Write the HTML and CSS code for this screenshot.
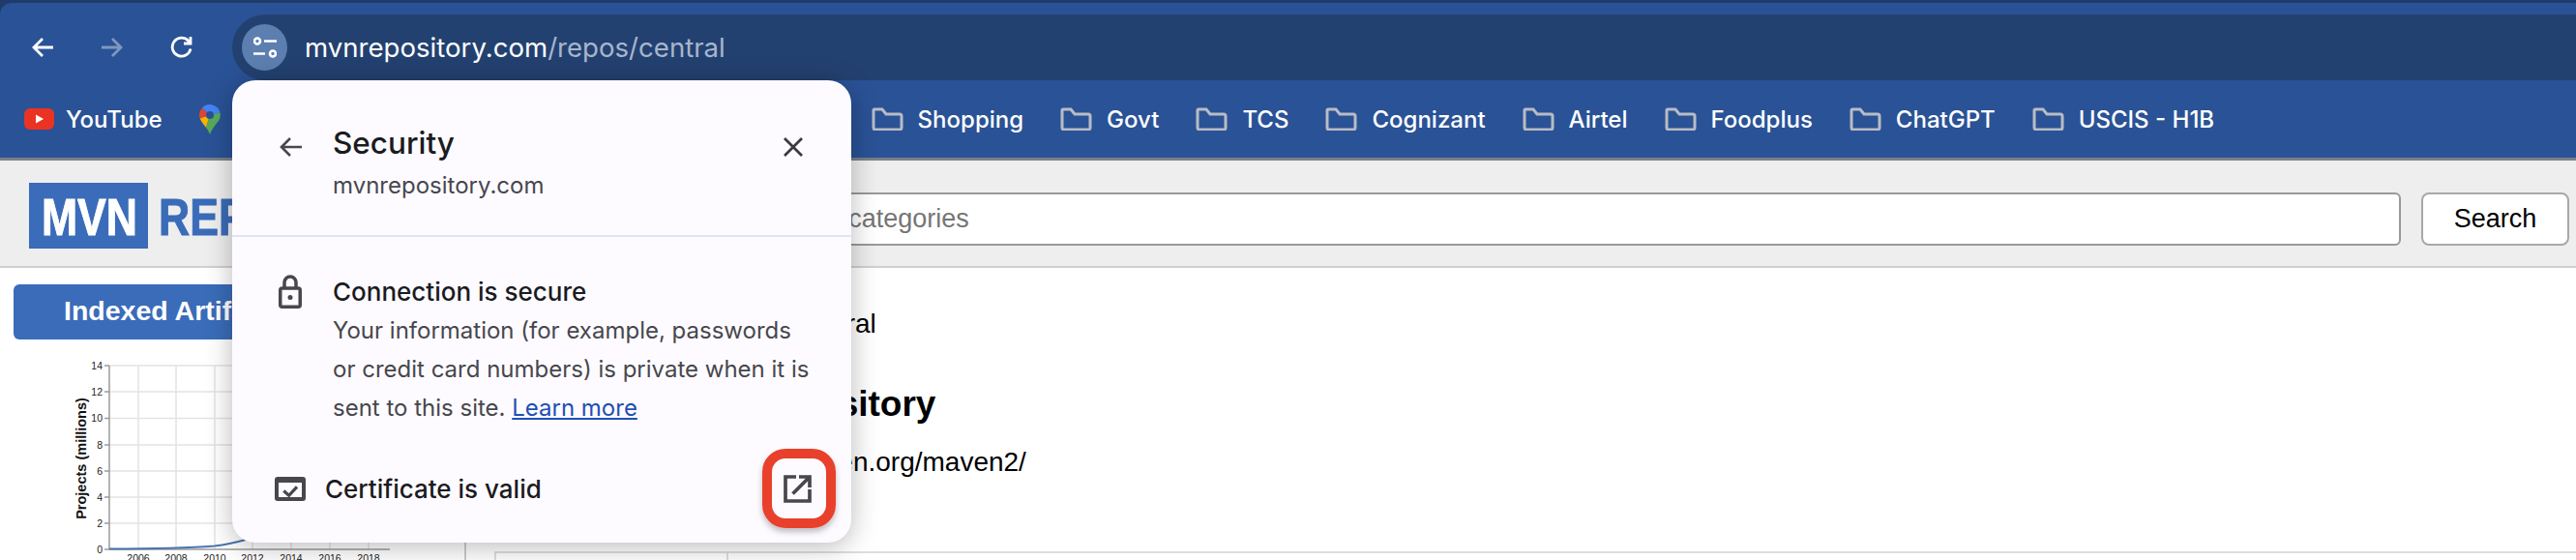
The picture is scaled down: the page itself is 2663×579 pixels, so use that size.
FILE: index.html
```html
<!DOCTYPE html>
<html lang="en">
<head>
  <meta charset="UTF-8" />
  <title>Security - mvnrepository.com</title>
  <link rel="stylesheet" href="styles.css">
</head>
<body>
  <div class="browser">
    <div class="toolbar">
      <div class="nav">
        <svg class="nav-icon" viewBox="0 0 24 24"><path d="M22 12H3M11 3l-9 9 9 9" /></svg>
        <svg class="nav-icon dim" viewBox="0 0 24 24"><path d="M2 12h19M13 3l9 9-9 9" /></svg>
        <svg class="nav-icon reload" viewBox="0 0 24 24"><path d="M21 13.500A9.500 9.500 0 1 1 18.500 5L21 7.500M21 1v7h-7" /></svg>
      </div>
      <div class="urlbar">
        <span class="site-info">
          <svg viewBox="0 0 24 26" width="24" height="26"><circle cx="4" cy="6.500" r="3" /><path d="M11 6.500h13M0 19.500h12" /><circle cx="20" cy="19.500" r="3" /></svg>
        </span>
        <span class="url">mvnrepository.com<span class="url-path">/repos/central</span></span>
      </div>
    </div>

    <div class="bookmarks">
      <div class="bookmark">
        <svg class="yt" viewBox="0 0 31 22"><rect width="31" height="22" rx="6" fill="#ea3323" /><path d="M12 6.500l8 4.500-8 4.500z" fill="#fff" /></svg>
        <span>YouTube</span>
      </div>
      <svg class="maps" viewBox="0 0 22 31">
        <path d="M3 3.400A11 11 0 0 0 .700 14.500L11 11z" fill="#db4437" />
        <path d="M3 3.400A11 11 0 0 1 21.500 8.500L11 11z" fill="#4285f4" />
        <path d="M.700 14.500C2 18 5 21 7 24l4-13z" fill="#f4b400" />
        <path d="M21.500 8.500A11 11 0 0 1 20 17C16 22 12.500 26 11 31 10 28 8.500 26 7 24l4-13z" fill="#5aa95a" />
        <circle cx="11" cy="11" r="4" fill="#2b5296" />
      </svg>
      <div class="bookmark shopping"><svg class="folder" viewBox="0 0 33 24"><path d="M2 3a1 1 0 0 1 1-1h8l4 5h14a2 2 0 0 1 2 2v12a2 2 0 0 1-2 2H4a2 2 0 0 1-2-2z" /></svg><span>Shopping</span></div>
      <div class="bookmark"><svg class="folder" viewBox="0 0 33 24"><path d="M2 3a1 1 0 0 1 1-1h8l4 5h14a2 2 0 0 1 2 2v12a2 2 0 0 1-2 2H4a2 2 0 0 1-2-2z" /></svg><span>Govt</span></div>
      <div class="bookmark"><svg class="folder" viewBox="0 0 33 24"><path d="M2 3a1 1 0 0 1 1-1h8l4 5h14a2 2 0 0 1 2 2v12a2 2 0 0 1-2 2H4a2 2 0 0 1-2-2z" /></svg><span>TCS</span></div>
      <div class="bookmark"><svg class="folder" viewBox="0 0 33 24"><path d="M2 3a1 1 0 0 1 1-1h8l4 5h14a2 2 0 0 1 2 2v12a2 2 0 0 1-2 2H4a2 2 0 0 1-2-2z" /></svg><span>Cognizant</span></div>
      <div class="bookmark"><svg class="folder" viewBox="0 0 33 24"><path d="M2 3a1 1 0 0 1 1-1h8l4 5h14a2 2 0 0 1 2 2v12a2 2 0 0 1-2 2H4a2 2 0 0 1-2-2z" /></svg><span>Airtel</span></div>
      <div class="bookmark"><svg class="folder" viewBox="0 0 33 24"><path d="M2 3a1 1 0 0 1 1-1h8l4 5h14a2 2 0 0 1 2 2v12a2 2 0 0 1-2 2H4a2 2 0 0 1-2-2z" /></svg><span>Foodplus</span></div>
      <div class="bookmark"><svg class="folder" viewBox="0 0 33 24"><path d="M2 3a1 1 0 0 1 1-1h8l4 5h14a2 2 0 0 1 2 2v12a2 2 0 0 1-2 2H4a2 2 0 0 1-2-2z" /></svg><span>ChatGPT</span></div>
      <div class="bookmark"><svg class="folder" viewBox="0 0 33 24"><path d="M2 3a1 1 0 0 1 1-1h8l4 5h14a2 2 0 0 1 2 2v12a2 2 0 0 1-2 2H4a2 2 0 0 1-2-2z" /></svg><span>USCIS - H1B</span></div>
    </div>
  </div>

  <header class="site-header">
    <svg class="logo" viewBox="0 0 440 68" width="440" height="68">
      <rect width="123" height="68" fill="#3a6cb9" />
      <text x="13" y="54" textLength="99" lengthAdjust="spacingAndGlyphs" class="logo-mvn">MVN</text>
      <text x="134" y="54" textLength="290" lengthAdjust="spacingAndGlyphs" class="logo-rep">REPOSITORY</text>
    </svg>
    <div class="search-box">Search for groups, artifacts, categories</div>
    <button class="search-btn">Search</button>
  </header>

  <div class="page">
    <aside class="sidebar">
      <div class="side-title">Indexed Artifacts (67.9M)</div>
      <svg class="chart" viewBox="0 0 400 229" width="400" height="229">
        <g class="grid">
          <path d="M113 27h290M113 54h290M113 81.500h290M113 109h290M113 136h290M113 163h290M113 190h290" />
          <path d="M143 27v190M182 27v190M222 27v190M261 27v190M301 27v190M341 27v190M381 27v190" />
        </g>
        <path class="axis" d="M113 27v190h290M108 27h5M108 54h5M108 81.500h5M108 109h5M108 136h5M108 163h5M108 190h5M108 217h5" />
        <path class="curve" d="M113 216.500C160 216.500 190 216 222 213.500C235 212 245 209.500 254 207C300 190 340 120 400 40" />
        <g class="ticks">
          <text x="106" y="31">14</text>
          <text x="106" y="58">12</text>
          <text x="106" y="85">10</text>
          <text x="106" y="113">8</text>
          <text x="106" y="140">6</text>
          <text x="106" y="167">4</text>
          <text x="106" y="194">2</text>
          <text x="106" y="221">0</text>
        </g>
        <g class="years">
          <text x="143" y="230">2006</text>
          <text x="182" y="230">2008</text>
          <text x="222" y="230">2010</text>
          <text x="261" y="230">2012</text>
          <text x="301" y="230">2014</text>
          <text x="341" y="230">2016</text>
          <text x="381" y="230">2018</text>
        </g>
        <text class="chart-label" transform="translate(89 123) rotate(-90)">Projects (millions)</text>
      </svg>
    </aside>
    <main class="content">
      <div class="crumbs">Home » Repositories » Central</div>
      <h2 class="repo-title">Maven Central Repository</h2>
      <div class="repo-url"><span class="repo-url-label">URL</span>https://repo1.maven.org/maven2/</div>
      <table class="repo-table"><tr><td class="repo-cell"></td><td></td></tr></table>
    </main>
  </div>

  <div class="popup">
    <div class="popup-head">
      <svg class="popup-back" viewBox="0 0 24 24"><path d="M23 12H3M11 3l-9 9 9 9" /></svg>
      <div class="popup-titles">
        <div class="popup-title">Security</div>
        <div class="popup-host">mvnrepository.com</div>
      </div>
      <svg class="popup-close" viewBox="0 0 22 20"><path d="M2 1l18 18M20 1L2 19" /></svg>
    </div>
    <div class="popup-body">
      <svg class="lock" viewBox="0 0 24 35">
        <path d="M6 14V8a6 6 0 0 1 12 0v6" />
        <rect x="1.750" y="14" width="20.500" height="19.250" rx="2" />
        <circle cx="12" cy="23.500" r="2.500" class="solid" />
      </svg>
      <div>
        <div class="conn-title">Connection is secure</div>
        <p class="conn-text">Your information (for example, passwords or credit card numbers) is private when it is sent to this site. <a class="learn" href="#">Learn more</a></p>
      </div>
    </div>
    <div class="cert-row">
      <svg class="cert-icon" viewBox="0 0 32 25">
        <rect width="32" height="25" rx="3" class="cert-frame" />
        <rect x="4" y="6" width="24" height="15" class="cert-inner" />
        <path d="M9.300 14.500l5.400 4.800 8.300-9" class="cert-check" />
      </svg>
      <span class="cert-text">Certificate is valid</span>
      <span class="cert-open">
        <svg viewBox="0 0 29 29" width="29" height="29"><path d="M13 2H2v25h25V15" /><path d="M9.500 19.500L26 3M16 2h11v11" /></svg>
      </span>
    </div>
  </div>
</body>
</html>
```

FILE: styles.css
```css
html, body {
  margin: 0;
  height: 579px;
  overflow: hidden;
  background: #fff;
  font-family: "Liberation Sans", Arial, sans-serif;
}

.browser {
  background: #1f3b6c;
  padding-top: 3px;
}

.toolbar {
  display: flex;
  height: 80px;
  background: #2a5296;
  border-radius: 12px 0 0 0;
}

.nav {
  display: flex;
  align-items: center;
  gap: 46px;
  flex: none;
  width: 240px;
  padding: 18px 0 6px 33px;
  box-sizing: border-box;
}

.nav-icon {
  flex: none;
  width: 24px;
  height: 24px;
  fill: none;
  stroke: #fff;
  stroke-width: 2.800;
}

.nav-icon.dim {
  stroke: #7f97bf;
}

.nav-icon.reload {
  margin-left: 3px;
}

.urlbar {
  flex: 1;
  display: flex;
  align-items: center;
  gap: 18px;
  margin-top: 12px;
  padding: 0 0 0 10px;
  background: #234170;
  border-radius: 34px 0 0 34px;
}

.site-info {
  display: flex;
  align-items: center;
  justify-content: center;
  width: 47px;
  height: 48px;
  border-radius: 50%;
  background: #5c7fb0;
}

.site-info svg {
  fill: none;
  stroke: #fff;
  stroke-width: 2.600;
}

.url {
  font-family: Inter, sans-serif;
  font-size: 27.600px;
  color: #fff;
}

.url-path {
  color: #a7b6ce;
}

.bookmarks {
  display: flex;
  align-items: center;
  gap: 38px;
  height: 80px;
  padding-left: 25px;
  background: #2a5296;
  border-bottom: 3px solid #7a8089;
}

.bookmark {
  display: flex;
  align-items: center;
  gap: 15px;
  font-family: Inter, sans-serif;
  font-size: 24px;
  font-weight: 500;
  color: #fff;
}

.yt {
  width: 31px;
  height: 22px;
  margin-right: -3px;
}

.maps {
  width: 22px;
  height: 31px;
}

.shopping {
  margin-left: 635px;
}

.folder {
  width: 33px;
  height: 24px;
  fill: none;
  stroke: #b8bcc4;
  stroke-width: 3;
}

.site-header {
  display: flex;
  align-items: flex-start;
  box-sizing: border-box;
  height: 111px;
  background: #eee;
  border-bottom: 2px solid #d0d0d0;
  padding: 23px 7px 0 30px;
}

.logo {
  flex: none;
  margin-right: 54px;
}

.logo-mvn {
  font-size: 54px;
  font-weight: bold;
  fill: #fff;
  stroke: #fff;
  stroke-width: 1;
}

.logo-rep {
  font-size: 54px;
  font-weight: bold;
  fill: #3a6cb9;
  stroke: #3a6cb9;
  stroke-width: 1;
}

.search-box {
  flex: 1;
  box-sizing: border-box;
  height: 55px;
  margin-top: 10px;
  line-height: 51px;
  padding-left: 12px;
  font-size: 27px;
  color: #757575;
  background: #fff;
  border: 2px solid #999;
  border-radius: 6px;
}

.search-btn {
  flex: none;
  box-sizing: border-box;
  width: 153px;
  height: 55px;
  margin: 10px 0 0 21px;
  font: 27px "Liberation Sans", Arial, sans-serif;
  color: #000;
  background: #fff;
  border: 2px solid #a8a8a8;
  border-radius: 8px;
}

.page {
  display: flex;
  height: 302px;
}

.sidebar {
  flex: none;
  box-sizing: border-box;
  width: 482px;
  padding: 17px 0 0 14px;
  border-right: 2px solid #ccc;
}

.side-title {
  box-sizing: border-box;
  width: 404px;
  height: 57px;
  line-height: 55px;
  padding-left: 52px;
  font-size: 28.500px;
  font-weight: bold;
  white-space: nowrap;
  color: #fff;
  background: #3a6cb9;
  border-radius: 6px;
}

.chart {
  display: block;
  margin: 0 0 0 -14px;
  overflow: visible;
}

.grid path {
  fill: none;
  stroke: #e4e4e4;
  stroke-width: 1.500;
}

.axis {
  fill: none;
  stroke: #9a9a9a;
  stroke-width: 1.500;
}

.curve {
  fill: none;
  stroke: #4a74ad;
  stroke-width: 2;
}

.ticks text {
  font-size: 10.500px;
  text-anchor: end;
  fill: #222;
}

.years text {
  font-size: 10.500px;
  text-anchor: middle;
  fill: #222;
}

.chart-label {
  font-size: 14.500px;
  font-weight: bold;
  text-anchor: middle;
  fill: #111;
}

.content {
  flex: 1;
  padding: 40px 0 0 29px;
  color: #000;
}

.crumbs {
  margin-left: 12px;
  font-size: 28px;
  line-height: 36px;
}

.repo-title {
  margin: 45px 0 0;
  font-size: 37px;
  line-height: 40px;
}

.repo-url {
  margin-top: 22px;
  font-size: 28px;
  line-height: 36px;
}

.repo-url-label {
  display: inline-block;
  width: 139px;
}

.repo-table {
  width: 100%;
  height: 12px;
  margin-top: 74px;
  border-collapse: collapse;
  border-top: 2px solid #ddd;
  border-left: 2px solid #ddd;
}

.repo-cell {
  width: 236px;
  border-right: 2px solid #ddd;
}

.popup {
  position: absolute;
  top: 83px;
  left: 240px;
  box-sizing: border-box;
  width: 640px;
  height: 478px;
  background: #fdfbff;
  border-radius: 24px;
  box-shadow: 0 4px 28px rgba(0, 0, 0, 0.28);
  font-family: Inter, sans-serif;
}

.popup-head {
  display: flex;
  height: 162px;
  padding: 0 49px;
  border-bottom: 2px solid #dce6f7;
  box-sizing: border-box;
}

.popup-back {
  flex: none;
  width: 24px;
  height: 24px;
  margin-top: 57px;
  fill: none;
  stroke: #47474d;
  stroke-width: 2.600;
}

.popup-titles {
  flex: 1;
  margin-left: 31px;
  padding-top: 45px;
}

.popup-title {
  font-size: 31.500px;
  font-weight: 500;
  line-height: 40px;
  color: #1b1b1f;
}

.popup-host {
  margin-top: 9px;
  font-size: 24px;
  line-height: 30px;
  color: #47474d;
}

.popup-close {
  flex: none;
  width: 22px;
  height: 20px;
  margin-top: 59px;
  fill: none;
  stroke: #3a3a40;
  stroke-width: 2.800;
}

.popup-body {
  display: flex;
  padding: 39px 39px 0 48px;
}

.lock {
  flex: none;
  width: 24px;
  height: 35px;
  margin-right: 32px;
  fill: none;
  stroke: #47474d;
  stroke-width: 3.500;
}

.lock .solid {
  fill: #47474d;
  stroke: none;
}

.conn-title {
  font-size: 26px;
  font-weight: 500;
  line-height: 36px;
  color: #1b1b1f;
}

.conn-text {
  margin: 2px 0 0;
  font-size: 24px;
  line-height: 40px;
  color: #47474d;
}

.learn {
  color: #1f4fb4;
}

.cert-row {
  display: flex;
  align-items: center;
  margin-top: 22px;
  padding: 0 16px 0 44px;
}

.cert-icon {
  flex: none;
  width: 32px;
  height: 25px;
  margin-right: 20px;
}

.cert-frame {
  fill: #47474d;
}

.cert-inner {
  fill: #fdfbff;
}

.cert-check {
  fill: none;
  stroke: #47474d;
  stroke-width: 3.200;
}

.cert-text {
  flex: 1;
  font-size: 26px;
  font-weight: 500;
  color: #1b1b1f;
}

.cert-open {
  display: flex;
  align-items: center;
  justify-content: center;
  box-sizing: border-box;
  width: 76px;
  height: 82px;
  border: 10px solid #e8402a;
  border-radius: 24px;
  box-shadow: 0 4px 6px rgba(0, 0, 0, 0.25);
}

.cert-open svg {
  margin-right: 3px;
  fill: none;
  stroke: #47474d;
  stroke-width: 3.700;
}
```
